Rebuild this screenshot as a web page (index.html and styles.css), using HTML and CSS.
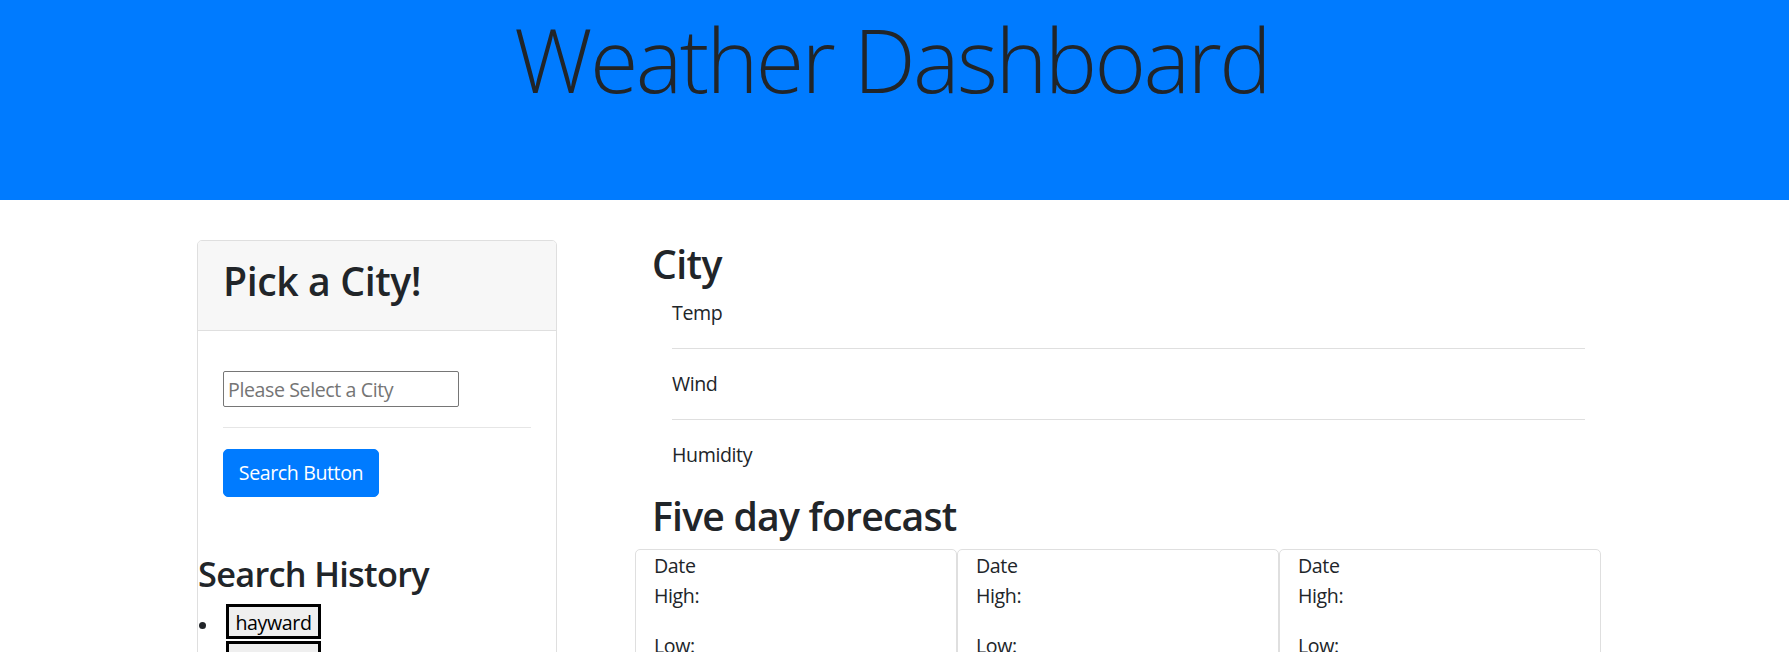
FILE: index.html
```html
<!DOCTYPE html>
<html lang="en">
<head>
<meta charset="utf-8">
<title>Weather Dashboard</title>
<link rel="stylesheet" href="styles.css">
</head>
<body>
<header class="jumbotron">
  <h1 class="display-title">Weather Dashboard</h1>
</header>
<main class="layout">
  <aside class="side-card">
    <div class="side-card-header">
      <h2 class="heading">Pick a City!</h2>
    </div>
    <div class="side-card-body">
      <input class="city-input" type="text" placeholder="Please Select a City">
      <hr class="divider">
      <button class="search-btn" type="button">Search Button</button>
    </div>
    <h3 class="history-title">Search History</h3>
    <ul class="history-list">
      <li><button class="history-btn" type="button">hayward</button></li>
      <li><button class="history-btn" type="button">hayward</button></li>
    </ul>
  </aside>
  <section class="content">
    <h2 class="heading city-title">City</h2>
    <ul class="stats">
      <li>Temp</li>
      <li>Wind</li>
      <li>Humidity</li>
    </ul>
    <h2 class="heading forecast-title">Five day forecast</h2>
    <div class="forecast">
      <div class="day-card"><div class="day-line">Date</div><p class="day-line day-p">High:</p><p class="day-line day-p">Low:</p></div>
      <div class="day-card"><div class="day-line">Date</div><p class="day-line day-p">High:</p><p class="day-line day-p">Low:</p></div>
      <div class="day-card"><div class="day-line">Date</div><p class="day-line day-p">High:</p><p class="day-line day-p">Low:</p></div>
      <div class="day-card"><div class="day-line">Date</div><p class="day-line day-p">High:</p><p class="day-line day-p">Low:</p></div>
      <div class="day-card"><div class="day-line">Date</div><p class="day-line day-p">High:</p><p class="day-line day-p">Low:</p></div>
    </div>
  </section>
</main>
</body>
</html>
```
FILE: styles.css
```css
html { overflow: hidden; }
body {
  margin: 0;
  font-family: "Open Sans", "Noto Sans", sans-serif;
  font-size: 19.6px;
  line-height: 30px;
  letter-spacing: -0.4px;
  color: #212529;
  background: #fff;
}

.jumbotron {
  box-sizing: border-box;
  height: 200px;
  padding-top: 6px;
  background: #007bff;
  text-align: center;
}
.display-title {
  margin: 0;
  font-size: 88px;
  font-weight: 300;
  line-height: 106px;
  letter-spacing: -2.6px;
  padding-right: 6px;
}

.layout {
  display: flex;
  align-items: flex-start;
  padding-top: 40px;
  padding-left: 197px;
}

.heading {
  margin: 0;
  font-size: 39.2px;
  font-weight: 600;
  line-height: 48px;
  letter-spacing: -0.6px;
}

/* left card */
.side-card {
  box-sizing: border-box;
  width: 360px;
  flex: none;
  border: 1px solid #dfdfdf;
  border-radius: 5px;
  padding-bottom: 40px;
}
.side-card-header {
  padding: 16px 25px 15px;
  background: #f7f7f7;
  border-bottom: 1px solid #dfdfdf;
  border-radius: 4px 4px 0 0;
}
.side-card-header .heading { margin-bottom: 10px; letter-spacing: -0.4px; }
.side-card-body {
  padding: 40px 25px 25px;
}
.city-input {
  display: block;
  box-sizing: border-box;
  width: 236px;
  height: 36px;
  margin: 0;
  padding: 0 4px;
  border: 1px solid #767676;
  border-radius: 2px;
  font-family: inherit;
  font-size: 19.6px;
  letter-spacing: -0.4px;
  color: #212529;
}
.city-input::placeholder { color: #757575; opacity: 1; }
.divider {
  margin: 20px 0 21px;
  border: 0;
  border-top: 1px solid #e6e6e6;
  height: 0;
}
.search-btn {
  display: block;
  box-sizing: border-box;
  width: 156px;
  height: 48px;
  padding: 0;
  border: 1px solid #007bff;
  border-radius: 5px;
  background: #007bff;
  color: #fff;
  font-family: inherit;
  font-size: 19.6px;
  letter-spacing: -0.4px;
  line-height: 46px;
  text-align: center;
}
.history-title {
  margin: 31px 0 10px;
  font-size: 34.3px;
  font-weight: 600;
  line-height: 41px;
  letter-spacing: -0.7px;
}
.history-list {
  list-style: none;
  margin: 0;
  padding: 0;
}
.history-list li {
  display: flex;
  align-items: flex-start;
  height: 37px;
}
.history-list li::before {
  content: "";
  flex: none;
  width: 7px;
  height: 7px;
  margin: 18px 20px 0 1px;
  border-radius: 50%;
  background: #212529;
}
.history-btn {
  box-sizing: border-box;
  height: 35px;
  width: 95px;
  margin: 0;
  padding: 2px 0 0;
  border: 3px solid #000;
  background: #efefef;
  color: #000;
  font-family: inherit;
  font-size: 19.6px;
  letter-spacing: -0.4px;
  line-height: 27px;
  text-align: center;
}

/* right column */
.content {
  box-sizing: border-box;
  width: 966px;
  margin-left: 78px;
  flex: none;
}
.city-title {
  padding-left: 17px;
  margin-bottom: 10px;
}
.stats {
  list-style: none;
  margin: 0 16px 0 37px;
  padding: 0;
}
.stats li {
  padding: 20px 0;
}
.stats li:first-child { padding-top: 0; }
.stats li + li { border-top: 1px solid #dfdfdf; }
.forecast-title {
  padding-left: 17px;
  margin-top: 2px;
  margin-bottom: 9px;
  letter-spacing: -0.8px;
}
.forecast {
  display: grid;
  grid-template-columns: repeat(3, 1fr);
}
.day-card {
  border: 1px solid #dfdfdf;
  border-radius: 5px;
  padding: 1px 18px 20px;
}
.day-line { margin: 0; }
.day-p { margin: 0 0 20px; }
```
